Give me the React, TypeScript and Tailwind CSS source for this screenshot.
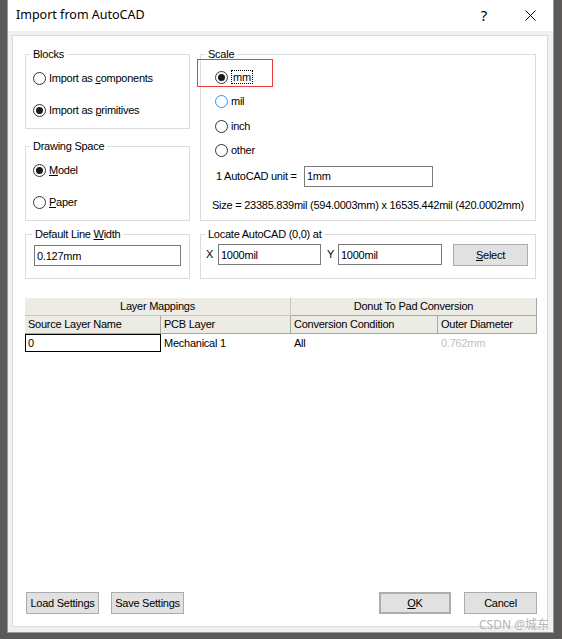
import clsx from "clsx";
import type { ReactNode } from "react";

const UI_FONT = "font-['Liberation_Sans',Arial,sans-serif] text-[11px] tracking-[-0.25px] text-black";

function Radio({
  checked,
  hover,
  children,
  className,
}: {
  checked?: boolean;
  hover?: boolean;
  children: ReactNode;
  className?: string;
}) {
  return (
    <div className={clsx("flex h-[16px] items-center", className)}>
      <span
        className={clsx(
          "flex h-[13px] w-[13px] items-center justify-center rounded-full border bg-white",
          hover ? "border-[#3c93d9]" : "border-[#333333]"
        )}
      >
        {checked && <span className="h-[7px] w-[7px] rounded-full bg-[#1a1a1a]" />}
      </span>
      <span className="ml-[3px]">{children}</span>
    </div>
  );
}

function GroupBox({
  title,
  className,
  legendClass,
  children,
}: {
  title: ReactNode;
  className?: string;
  legendClass?: string;
  children: ReactNode;
}) {
  return (
    <fieldset className={clsx("min-w-0 border border-[#dcdcdc]", className)}>
      <legend className={clsx("ml-[4px] px-[3px] leading-[14px]", legendClass)}>{title}</legend>
      {children}
    </fieldset>
  );
}

function TextBox({ value, className }: { value: string; className?: string }) {
  return (
    <input
      readOnly
      value={value}
      className={clsx("h-[21px] border border-[#7a7a7a] bg-white px-[2px] outline-none", className)}
    />
  );
}

function Button({ children, className }: { children: ReactNode; className?: string }) {
  return (
    <button
      type="button"
      className={clsx(
        "flex h-[22px] items-center justify-center border border-[#adadad] bg-[#e1e1e1] text-black",
        className
      )}
    >
      {children}
    </button>
  );
}

export default function App() {
  return (
    <div className="relative h-[639px] w-[562px] overflow-hidden bg-[#5b5a59] pl-[7px]">
      <div className="flex h-[633px] w-[547px] flex-col border-x border-b border-[#9a9a9a] bg-[#f0f0f0]">
        {/* title bar */}
        <div className="flex h-[31px] shrink-0 items-center bg-white pl-[8px] font-['Noto_Sans',sans-serif] text-[12.5px] text-black">
          <span>Import from AutoCAD</span>
          <span className="ml-auto flex h-full w-[46px] items-center justify-center text-[15px]">?</span>
          <span className="flex h-full w-[46px] items-center justify-center">
            <svg width="11" height="11" viewBox="0 0 11 11">
              <path d="M0.5 0.5 L10.5 10.5 M10.5 0.5 L0.5 10.5" stroke="#000" strokeWidth="1" />
            </svg>
          </span>
        </div>

        {/* content panel */}
        <div
          className={clsx(
            "relative mt-[4px] ml-[4px] flex h-[592px] w-[536px] flex-col border border-[#dcdcdc] bg-white pt-[11px] pl-[12px]",
            UI_FONT
          )}
        >
          <div className="flex gap-[10px]">
            <div className="flex w-[165px] flex-col">
              <GroupBox title="Blocks" className="h-[82px]">
                <div className="mt-[9px] flex flex-col gap-[16px] pl-[7px]">
                  <Radio>
                    Import as <u>c</u>omponents
                  </Radio>
                  <Radio checked>
                    Import as <u>p</u>rimitives
                  </Radio>
                </div>
              </GroupBox>
              <GroupBox title="Drawing Space" className="mt-[10px] h-[82px]">
                <div className="mt-[9px] flex flex-col gap-[16px] pl-[7px]">
                  <Radio checked>
                    <u>M</u>odel
                  </Radio>
                  <Radio>
                    <u>P</u>aper
                  </Radio>
                </div>
              </GroupBox>
            </div>

            <GroupBox title="Scale" className="h-[174px] w-[336px]">
              <div className="mt-[8px] flex flex-col gap-[8.5px] pl-[14px]">
                <Radio checked>
                  <span className="border border-dotted border-black px-[1px]">mm</span>
                </Radio>
                <Radio hover>mil</Radio>
                <Radio>inch</Radio>
                <Radio>other</Radio>
              </div>
              <div className="mt-[7px] flex items-center pl-[15px]">
                <span className="w-[88px]">1 AutoCAD unit =</span>
                <TextBox value="1mm" className="w-[129px]" />
              </div>
              <div className="mt-[11px] pl-[11px] leading-[14px]">
                Size = 23385.839mil (594.0003mm) x 16535.442mil (420.0002mm)
              </div>
            </GroupBox>
          </div>

          <div className="mt-[6px] flex gap-[10px]">
            <GroupBox
              title={
                <>
                  Default Line <u>W</u>idth
                </>
              }
              legendClass="ml-[6px]"
              className="h-[52px] w-[165px]"
            >
              <TextBox value="0.127mm" className="mt-[4px] ml-[8px] w-[147px]" />
            </GroupBox>
            <GroupBox title="Locate AutoCAD (0,0) at" className="h-[52px] w-[336px]">
              <div className="mt-[2px] flex items-center pl-[5px]">
                <span className="w-[12px]">X</span>
                <TextBox value="1000mil" className="w-[103px]" />
                <span className="ml-[6px] w-[11px]">Y</span>
                <TextBox value="1000mil" className="w-[104px]" />
                <Button className="mt-[1px] ml-[11px] w-[75px]">
                  <u>S</u>elect
                </Button>
              </div>
            </GroupBox>
          </div>

          {/* layer mapping grid */}
          <div className="mt-[19px] w-[512px]">
            <div className="grid h-[18px] grid-cols-[266px_246px] bg-[#ecebe4] text-center leading-[17px]">
              <div className="border-r border-b border-[#c8c8c0]">Layer Mappings</div>
              <div className="border-r border-b border-[#a8a8a0]">Donut To Pad Conversion</div>
            </div>
            <div className="grid h-[18px] grid-cols-[136px_130px_147px_99px] bg-[#ecebe4] leading-[17px]">
              <div className="border-r border-b border-[#a8a8a0] pl-[3px]">Source Layer Name</div>
              <div className="border-r border-b border-[#a8a8a0] pl-[3px]">PCB Layer</div>
              <div className="border-r border-b border-[#a8a8a0] pl-[3px]">Conversion Condition</div>
              <div className="border-r border-b border-[#a8a8a0] pl-[3px]">Outer Diameter</div>
            </div>
            <div className="grid h-[18px] grid-cols-[136px_130px_147px_99px] leading-[16px]">
              <div className="border border-black pl-[2px]">0</div>
              <div className="pl-[3px] leading-[18px]">Mechanical 1</div>
              <div className="pl-[3px] leading-[18px]">All</div>
              <div className="pl-[3px] leading-[18px] text-[#c0c0c0]">0.762mm</div>
            </div>
          </div>

          {/* bottom buttons */}
          <div className="mt-auto mb-[12px] flex items-center pr-[10px] pl-[1px]">
            <Button className="w-[73px]">Load Settings</Button>
            <Button className="ml-[12px] w-[73px]">Save Settings</Button>
            <Button className="ml-auto w-[72px] border-2 border-[#0078d7]">
              <u>O</u>K
            </Button>
            <Button className="ml-[13px] w-[73px]">Cancel</Button>
          </div>

          {/* highlight annotation */}
          <div className="pointer-events-none absolute top-[23px] left-[184px] h-[28px] w-[76px] border border-[#ec3b3b]" />
        </div>
      </div>

      <div className="pointer-events-none absolute top-[616px] left-[479px] font-['Noto_Sans','Noto_Sans_CJK_SC',sans-serif] text-[12px] text-[#b4b4b4]">
        CSDN @城东
      </div>
    </div>
  );
}
